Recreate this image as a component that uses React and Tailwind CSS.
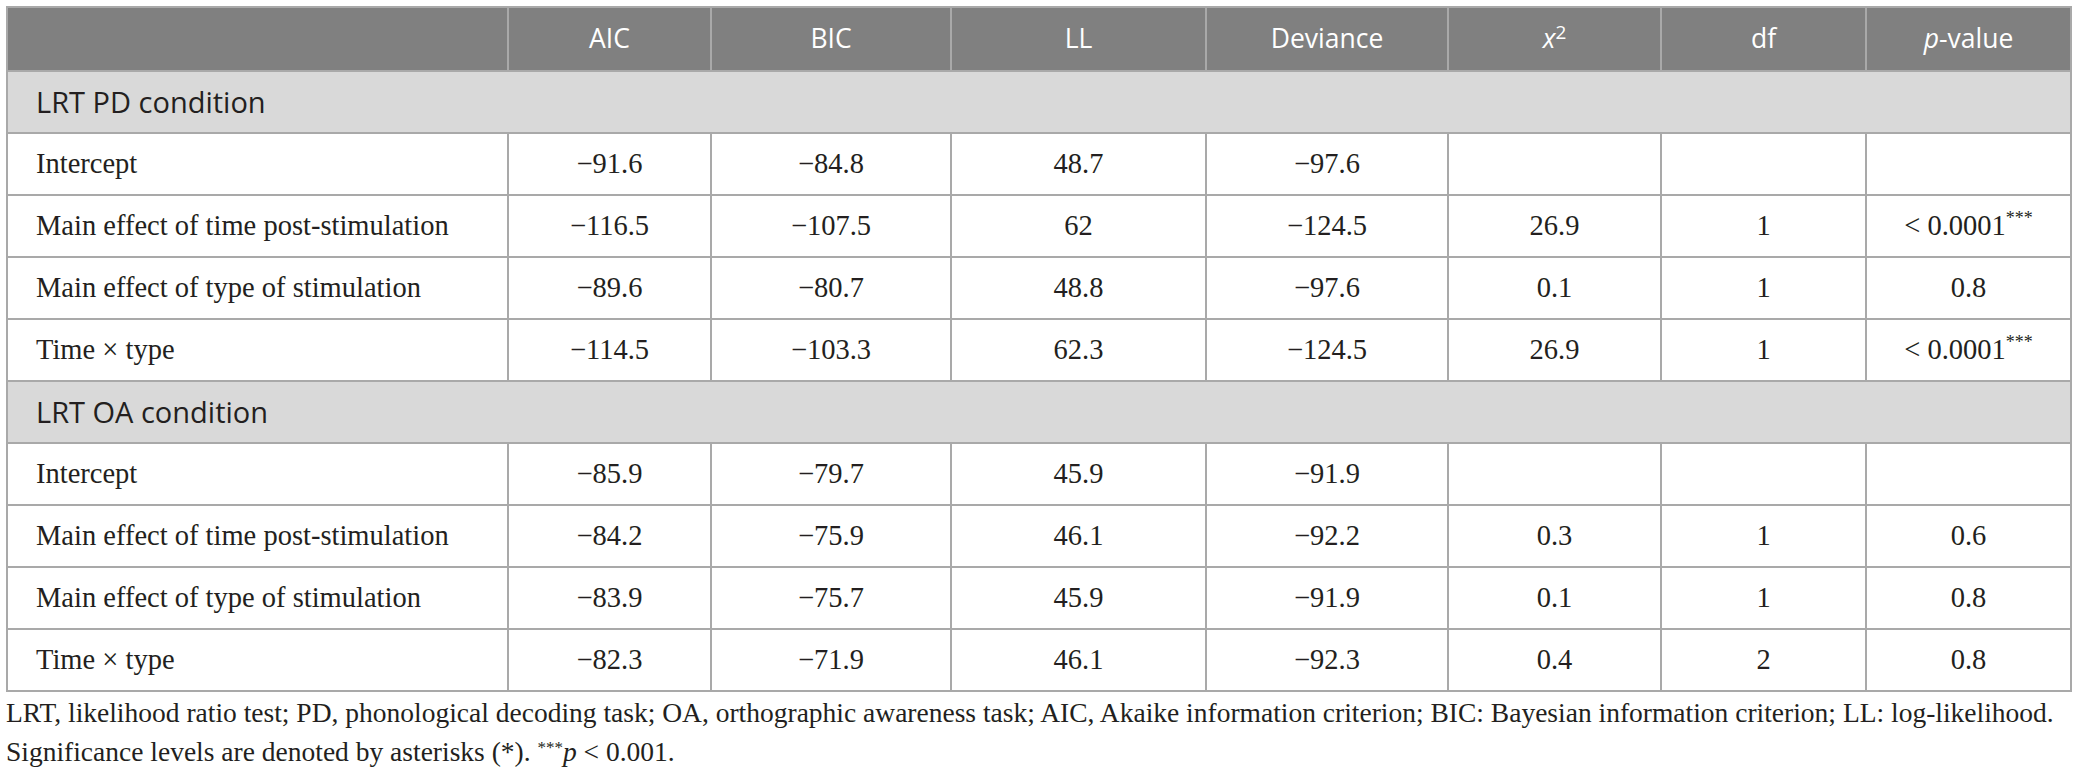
const cols = [501, 203, 240, 255, 242, 213, 205, 205];

const pd = [
  ["Intercept", "−91.6", "−84.8", "48.7", "−97.6", "", "", ""],
  ["Main effect of time post-stimulation", "−116.5", "−107.5", "62", "−124.5", "26.9", "1", "sig"],
  ["Main effect of type of stimulation", "−89.6", "−80.7", "48.8", "−97.6", "0.1", "1", "0.8"],
  ["Time × type", "−114.5", "−103.3", "62.3", "−124.5", "26.9", "1", "sig"],
];

const oa = [
  ["Intercept", "−85.9", "−79.7", "45.9", "−91.9", "", "", ""],
  ["Main effect of time post-stimulation", "−84.2", "−75.9", "46.1", "−92.2", "0.3", "1", "0.6"],
  ["Main effect of type of stimulation", "−83.9", "−75.7", "45.9", "−91.9", "0.1", "1", "0.8"],
  ["Time × type", "−82.3", "−71.9", "46.1", "−92.3", "0.4", "2", "0.8"],
];

const headCell =
  "border-2 border-[#a9a9a9] bg-[#808080] text-white text-center font-normal text-[26.5px] h-[64px] p-0 font-['Open_Sans',sans-serif]";
const bodyCell =
  "border-2 border-[#a9a9a9] h-[62px] p-0 text-center text-[28.5px] text-[#231f20] font-['Liberation_Serif',serif]";

function Section({ title }) {
  return (
    <tr>
      <td
        colSpan={8}
        className="border-2 border-[#a9a9a9] bg-[#d9d9d9] h-[62px] p-0 pl-[28px] text-left text-[29px] text-[#231f20] font-['Open_Sans',sans-serif]"
      >
        {title}
      </td>
    </tr>
  );
}

function DataRow({ row }) {
  return (
    <tr>
      {row.map((v, i) => (
        <td key={i} className={i === 0 ? bodyCell + " text-left pl-[28px]" : bodyCell}>
          {v === "sig" ? (
            <>
              &lt; 0.0001<sup className="text-[18px] top-[-0.6em]">***</sup>
            </>
          ) : (
            v
          )}
        </td>
      ))}
    </tr>
  );
}

export default function App() {
  return (
    <div className="bg-white w-[2077px] h-[782px] pt-[6px] pl-[6px]">
      <table className="table-fixed border-collapse w-[2064px]">
        <colgroup>
          {cols.map((w, i) => (
            <col key={i} style={{ width: w }} />
          ))}
        </colgroup>
        <thead>
          <tr>
            <th className={headCell}></th>
            <th className={headCell}>AIC</th>
            <th className={headCell}>BIC</th>
            <th className={headCell}>LL</th>
            <th className={headCell}>Deviance</th>
            <th className={headCell}>
              <i>x</i>
              <sup className="text-[19px]">2</sup>
            </th>
            <th className={headCell}>df</th>
            <th className={headCell}>
              <i>p</i>-value
            </th>
          </tr>
        </thead>
        <tbody>
          <Section title="LRT PD condition" />
          {pd.map((r, i) => (
            <DataRow key={i} row={r} />
          ))}
          <Section title="LRT OA condition" />
          {oa.map((r, i) => (
            <DataRow key={i} row={r} />
          ))}
        </tbody>
      </table>
      <div className="mt-[1px] text-[27.5px] leading-[39px] text-[#231f20] whitespace-nowrap font-['Liberation_Serif',serif]">
        <p>
          LRT, likelihood ratio test; PD, phonological decoding task; OA, orthographic awareness task; AIC, Akaike
          information criterion; BIC: Bayesian information criterion; LL: log-likelihood.
        </p>
        <p>
          Significance levels are denoted by asterisks (*). <sup className="text-[17px]">***</sup>
          <i>p</i> &lt; 0.001.
        </p>
      </div>
    </div>
  );
}
